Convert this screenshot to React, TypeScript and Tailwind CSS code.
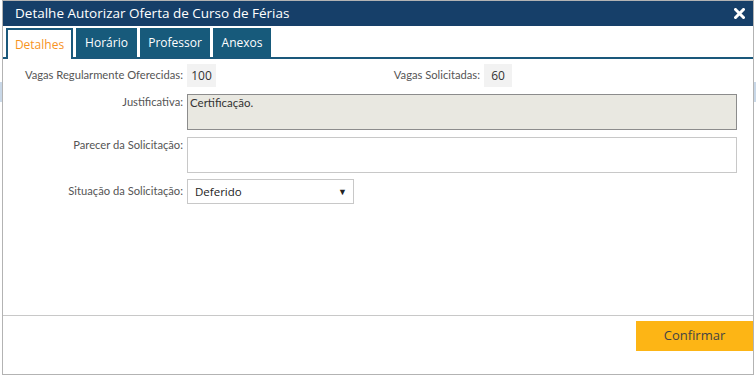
import { ReactNode } from 'react';

const font = { fontFamily: '"Open Sans", "Noto Sans", sans-serif' };
const labelFont = { fontFamily: 'Lato, "Open Sans", sans-serif' };

const tabs = ['Detalhes', 'Horário', 'Professor', 'Anexos'];

const Label = ({ children, className = '' }: { children: ReactNode; className?: string }) => (
  <div className={`shrink-0 pr-[4px] text-right text-[11.2px] text-[#555] ${className}`} style={labelFont}>
    {children}
  </div>
);

const Row = ({ label, children, className = '' }: { label: string; children: ReactNode; className?: string }) => (
  <div className={`flex ${className}`}>
    <Label className="w-[184px]">{label}</Label>
    <div className="flex-1 pr-[16px]">{children}</div>
  </div>
);

export default function App() {
  return (
    <div className="relative w-[756px] h-[377px] bg-white overflow-hidden" style={font}>
      {/* background page bits behind the modal */}
      <div className="absolute left-0 top-[82px] w-[2px] h-[20px] bg-[#c9d8e8]" />
      <div className="absolute right-0 top-[82px] w-[2px] h-[20px] bg-[#c9d8e8]" />

      <div className="relative ml-[2px] w-[752px] h-[375px] border border-[#b3b3b3] bg-white flex flex-col">
        {/* title bar */}
        <div className="h-[25px] bg-[#163f69] flex items-center justify-between pl-[12px] pr-[8px]">
          <span className="text-white text-[13.5px]">Detalhe Autorizar Oferta de Curso de Férias</span>
          <svg width="11" height="11" viewBox="0 0 11 11">
            <path d="M1.5 1.5 L9.5 9.5 M9.5 1.5 L1.5 9.5" stroke="white" strokeWidth="3" strokeLinecap="square" />
          </svg>
        </div>

        {/* tabs */}
        <div className="flex items-end gap-[3px] pl-[3px] pt-[3px] border-b-2 border-[#1a587b] h-[33px]">
          {tabs.map((t, i) =>
            i === 0 ? (
              <div
                key={t}
                className="h-[31px] -mb-[2px] w-[67px] flex items-center justify-center bg-white border-2 border-b-0 border-[#1a587b] text-[#f7931e] text-[12px]"
              >
                {t}
              </div>
            ) : (
              <div
                key={t}
                className={`h-[29px] flex items-center justify-center bg-[#175a7b] text-white text-[12px] ${
                  i === 1 ? 'w-[61px]' : i === 2 ? 'w-[70px]' : 'w-[58px]'
                }`}
              >
                {t}
              </div>
            )
          )}
        </div>

        {/* form */}
        <div className="flex flex-col pt-[5px] flex-1">
          <div className="flex items-center h-[23px]">
            <Label className="w-[184px]">Vagas Regularmente Oferecidas:</Label>
            <div className="w-[29px] h-[23px] bg-[#f2f2f2] flex items-center justify-center text-[12px] text-[#333]">100</div>
            <Label className="w-[268px]">Vagas Solicitadas:</Label>
            <div className="w-[28px] h-[23px] bg-[#f2f2f2] flex items-center justify-center text-[12px] text-[#333]">60</div>
          </div>

          <Row label="Justificativa:" className="items-start mt-[7px]">
            <div className="h-[36px] bg-[#e9e8e1] border border-[#8c8c8c] px-[2px] text-[11.5px] text-[#333] leading-[16px]" style={labelFont}>
              Certificação.
            </div>
          </Row>

          <Row label="Parecer da Solicitação:" className="items-start mt-[7px]">
            <div className="h-[36px] bg-white border border-[#c8c8c8]" />
          </Row>

          <Row label="Situação da Solicitação:" className="items-center mt-[6px]">
            <div className="w-[167px] h-[25px] bg-white border border-[#c8c8c8] flex items-center justify-between pl-[7px] pr-[6px] text-[11.5px] text-[#222]">
              <span>Deferido</span>
              <span className="text-[9px]">▼</span>
            </div>
          </Row>
        </div>

        {/* footer */}
        <div className="border-t border-[#c8c8c8] h-[59px] flex justify-end pt-[5px]">
          <button className="w-[117px] h-[30px] bg-[#fdb515] text-[#444] text-[13px]">Confirmar</button>
        </div>
      </div>
    </div>
  );
}
